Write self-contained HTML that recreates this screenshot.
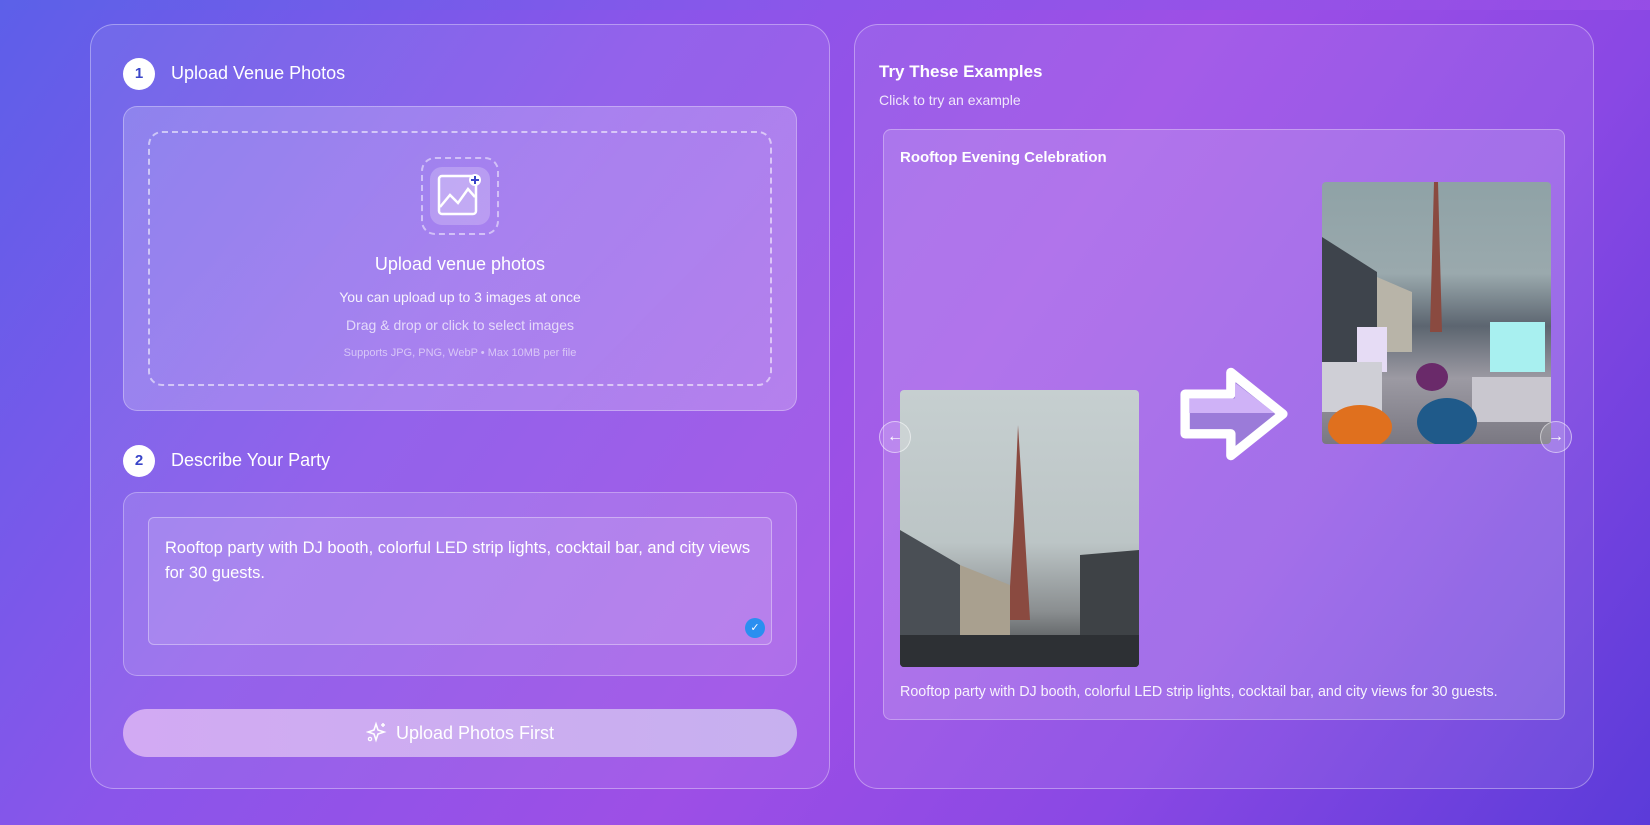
<!DOCTYPE html>
<html><head><meta charset="utf-8"><style>
*{box-sizing:border-box;margin:0;padding:0}
body{width:1650px;height:825px;overflow:hidden;font-family:"Liberation Sans",sans-serif;color:#fff;
background:linear-gradient(125deg,#5d5fe9 0%,#8a55ea 30%,#9d4fe6 55%,#8a48e4 75%,#5b3bd9 100%);position:relative}
.topband{position:absolute;left:0;top:0;width:100%;height:10px;background:linear-gradient(90deg,#5a62e8,#8a58ea,#9a4fe6);opacity:.7}
.panel{position:absolute;top:24px;height:765px;border:1px solid rgba(255,255,255,.35);border-radius:24px;background:rgba(255,255,255,.08)}
.num{position:absolute;width:32px;height:32px;border-radius:50%;background:#fff;color:#3a45c9;font-size:15px;text-align:center;line-height:32px;font-weight:bold}
.h{position:absolute;font-size:18px;font-weight:500}
.box{position:absolute;border:1px solid rgba(255,255,255,.3);border-radius:14px;background:rgba(255,255,255,.12)}
.c{position:absolute;left:0;width:100%;text-align:center}
</style></head><body>
<div class="topband"></div>

<div class="panel" style="left:90px;width:740px">
  <div class="num" style="left:32px;top:33px">1</div>
  <div class="h" style="left:80px;top:38px">Upload Venue Photos</div>
  <div class="box" style="left:32px;top:81px;width:674px;height:305px;background:linear-gradient(135deg,rgba(255,255,255,.18),rgba(255,255,255,.22))">
    <div style="position:absolute;left:24px;top:24px;width:624px;height:255px;border:2px dashed rgba(255,255,255,.55);border-radius:14px">
      <div style="position:absolute;left:271px;top:24px;width:78px;height:78px;border:2px dashed rgba(255,255,255,.5);border-radius:14px"></div>
      <div style="position:absolute;left:280px;top:34px;width:60px;height:58px;border-radius:12px;background:rgba(255,255,255,.22)">
        <svg width="60" height="58" viewBox="0 0 60 58"><rect x="9" y="9" width="37" height="38" rx="3" fill="rgba(255,255,255,.15)" stroke="#fff" stroke-width="2.5"/><path d="M10 40 L20 28 L28 36 L38 22 L45 30" fill="none" stroke="#fff" stroke-width="2.5"/><circle cx="45" cy="13" r="6" fill="#fff"/><path d="M45 9v8M41 13h8" stroke="#3a45c9" stroke-width="2"/></svg>
      </div>
      <div class="c" style="top:121px;font-size:18px">Upload venue photos</div>
      <div class="c" style="top:156px;font-size:14px;opacity:.9">You can upload up to 3 images at once</div>
      <div class="c" style="top:184px;font-size:14px;opacity:.7">Drag &amp; drop or click to select images</div>
      <div class="c" style="top:214px;font-size:11px;opacity:.55">Supports JPG, PNG, WebP • Max 10MB per file</div>
    </div>
  </div>
  <div class="num" style="left:32px;top:420px">2</div>
  <div class="h" style="left:80px;top:425px">Describe Your Party</div>
  <div class="box" style="left:32px;top:467px;width:674px;height:184px">
    <div style="position:absolute;left:24px;top:24px;width:624px;height:128px;border:1px solid rgba(255,255,255,.35);border-radius:6px;background:rgba(255,255,255,.12);padding:18px 16px;font-size:16.5px;line-height:25px">Rooftop party with DJ booth, colorful LED strip lights, cocktail bar, and city views for 30 guests.
      <div style="position:absolute;right:6px;bottom:6px;width:20px;height:20px;border-radius:50%;background:#2a8ff0;font-size:11px;text-align:center;line-height:20px">✓</div>
    </div>
  </div>
  <div style="position:absolute;left:32px;top:684px;width:674px;height:48px;border-radius:24px;background:linear-gradient(90deg,#d2aaf3,#c7b0ef);text-align:center;line-height:48px;font-size:18px;font-weight:500">
    <svg width="22" height="22" viewBox="0 0 22 22" style="vertical-align:-4px;margin-right:8px"><path d="M10 3 L12 9 L18 11 L12 13 L10 19 L8 13 L2 11 L8 9 Z" fill="none" stroke="#fff" stroke-width="1.6"/><path d="M17 2v4M15 4h4" stroke="#fff" stroke-width="1.5"/><circle cx="4" cy="18" r="1.6" fill="none" stroke="#fff" stroke-width="1.3"/></svg>Upload Photos First</div>
</div>

<div class="panel" style="left:854px;width:740px">
  <div class="h" style="left:24px;top:37px;font-size:17px;font-weight:bold">Try These Examples</div>
  <div style="position:absolute;left:24px;top:67px;font-size:14px;opacity:.85">Click to try an example</div>
  <div class="box" style="left:28px;top:104px;width:682px;height:591px;border-radius:8px;background:rgba(255,255,255,.15)">
    <div style="position:absolute;left:16px;top:19px;font-size:15px;font-weight:bold">Rooftop Evening Celebration</div>
    <div style="position:absolute;left:16px;top:260px;width:239px;height:277px;border-radius:4px;overflow:hidden;background:linear-gradient(180deg,#c6cfd0 0%,#bcc5c6 55%,#8a8e90 80%,#3a3d40 100%)">
      <svg width="239" height="277" viewBox="0 0 239 277"><path d="M118 35 L114 130 L108 230 L130 230 L124 130 Z" fill="#8a4a40"/><path d="M0 140 L60 175 L60 277 L0 277Z" fill="#4a4f55"/><path d="M60 175 L110 195 L110 277 L60 277Z" fill="#a9a08f"/><path d="M180 165 L239 160 L239 277 L180 277Z" fill="#3e4246"/><rect x="0" y="245" width="239" height="32" fill="#2d3034"/></svg>
    </div>
    <svg style="position:absolute;left:292px;top:232px" width="116" height="104" viewBox="0 0 110 100"><path d="M8 31 H52 V10 L102 50 L52 90 V69 H8 Z" fill="#9b7bd9" stroke="#fff" stroke-width="9" stroke-linejoin="round"/><path d="M12 35 H56 V20 L94 49 H12Z" fill="#cfb2f7"/></svg>
    <div style="position:absolute;left:438px;top:52px;width:229px;height:262px;border-radius:4px;overflow:hidden;background:linear-gradient(180deg,#8fa2a6 0%,#9aa9ad 35%,#5c6570 55%,#9c9aa3 75%,#7a7882 100%)">
      <svg width="229" height="262" viewBox="0 0 229 262"><path d="M112 0 L108 150 L120 150 L116 0Z" fill="#8a4a40"/><path d="M0 55 L55 90 L55 180 L0 190Z" fill="#3e444c"/><path d="M55 95 L90 110 L90 170 L55 170Z" fill="#b8b4a8"/><rect x="35" y="145" width="30" height="45" fill="#e6dcf5"/><rect x="168" y="140" width="55" height="50" fill="#a8f0f0"/><rect x="0" y="180" width="60" height="50" fill="#cfcfd6"/><rect x="150" y="195" width="79" height="45" fill="#c9c7cf"/><ellipse cx="38" cy="245" rx="32" ry="22" fill="#e0701e"/><ellipse cx="125" cy="240" rx="30" ry="24" fill="#1f5a8a"/><ellipse cx="110" cy="195" rx="16" ry="14" fill="#6a2a6a"/></svg>
    </div>
    <div style="position:absolute;left:-5px;top:291px;width:32px;height:32px;border-radius:50%;border:1px solid rgba(255,255,255,.5);background:rgba(255,255,255,.15);text-align:center;line-height:30px;font-size:16px">←</div>
    <div style="position:absolute;left:656px;top:291px;width:32px;height:32px;border-radius:50%;border:1px solid rgba(255,255,255,.5);background:rgba(255,255,255,.15);text-align:center;line-height:30px;font-size:16px">→</div>
    <div style="position:absolute;left:16px;top:554px;font-size:14.3px;opacity:.92">Rooftop party with DJ booth, colorful LED strip lights, cocktail bar, and city views for 30 guests.</div>
  </div>
</div>
</body></html>
